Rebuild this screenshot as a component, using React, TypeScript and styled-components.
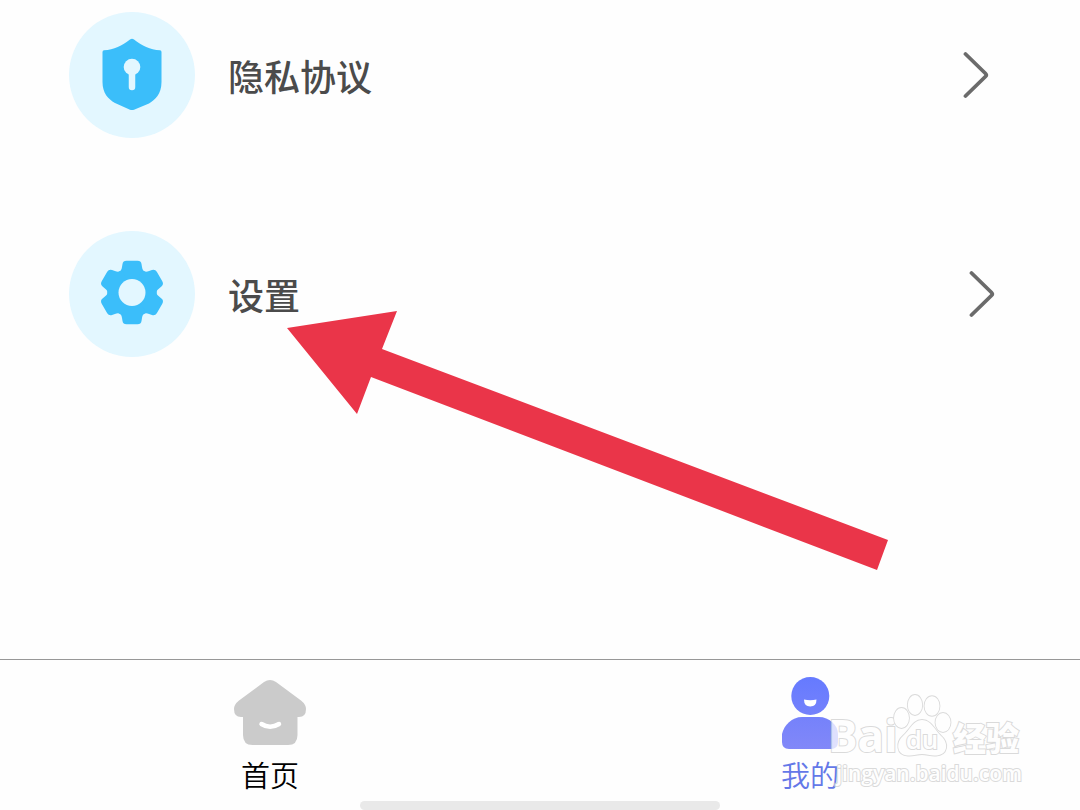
import React from "react";
import styled, { createGlobalStyle } from "styled-components";

const GlobalStyle = createGlobalStyle`
  *, *::before, *::after { box-sizing: border-box; }
  body {
    margin: 0;
    background: #fefefe;
    font-family: "Noto Sans CJK SC", "Noto Sans", sans-serif;
  }
`;

const Page = styled.div`
  position: relative;
  display: flex;
  flex-direction: column;
  min-height: 100vh;
  overflow: hidden;
`;

const Menu = styled.main`
  flex: 1;
  display: flex;
  flex-direction: column;
  gap: 93px;
  padding-top: 12px;
`;

const MenuRow = styled.button<{ $end: number }>`
  display: flex;
  align-items: center;
  gap: 33px;
  width: 100%;
  padding: 0 ${(p) => p.$end}px 0 69px;
  border: 0;
  background: none;
  color: #4b4b4b;
  font: inherit;
  text-align: left;
  cursor: pointer;
`;

const Badge = styled.span`
  display: flex;
  flex: none;
  width: 126px;
  height: 126px;
  border-radius: 50%;
  background: #e3f7ff;
`;

const RowLabel = styled.span`
  flex: 1;
  font-size: 36px;
  font-weight: 500;
  line-height: 54px;
`;

const TabBar = styled.nav`
  display: grid;
  grid-template-columns: 1fr 1fr;
  border-top: 1px solid #979797;
`;

const Tab = styled.a<{ $active?: boolean }>`
  display: flex;
  flex-direction: column;
  align-items: center;
  gap: 2px;
  padding-top: 16px;
  color: ${(p) => (p.$active ? "#6478e8" : "#000")};
  font-size: 29px;
  font-weight: 350;
  line-height: 44px;
  text-decoration: none;
`;

const HomeIndicator = styled.div`
  align-self: center;
  width: 33.333%;
  height: 9px;
  margin-top: 5px;
  border-radius: 5px;
  background: #e9e9e9;
`;

const Pointer = styled.svg`
  position: absolute;
  top: 310px;
  left: 287px;
  pointer-events: none;
`;

const Watermark = styled.div`
  position: absolute;
  right: 58px;
  bottom: 22px;
  width: 194px;
  opacity: 0.75;
  color: #fff;
  font-family: "Open Sans", "Noto Sans CJK SC", sans-serif;
  font-weight: 700;
  -webkit-text-stroke: 2px #cfcfcf;
  paint-order: stroke fill;
  pointer-events: none;
`;

const Brand = styled.div`
  display: flex;
  align-items: flex-end;
  height: 64px;
  font-size: 44px;
  line-height: 46px;
`;

const BrandName = styled.span`
  width: 65px;
  white-space: nowrap;
`;

const BrandSection = styled.span`
  font-family: "Noto Sans CJK SC", sans-serif;
  font-size: 33px;
  font-weight: 900;
  line-height: 42px;
`;

const Domain = styled.div`
  font-size: 21px;
  font-weight: 600;
  line-height: 30px;
  text-align: right;
  white-space: nowrap;
`;

const ShieldIcon = () => (
  <svg width="126" height="126" viewBox="0 0 126 126" aria-hidden="true">
    <path
      d="M61 27.400Q63 26 65 27.400C73 33.500 81 37.500 91 38.300Q92.500 38.500 92.500 40V70C92.500 82 86 88 80 91.500L65 97.700Q63 98.500 61 97.700L46 91C39 87 33.500 81 33.500 70V40Q33.500 38.500 35 38.300C45 37.500 53 33.500 61 27.400Z"
      fill="#3bbefa"
    />
    <circle cx="63" cy="55" r="8.300" fill="#e3f7ff" />
    <path d="M63 59V75" stroke="#e3f7ff" strokeWidth="6.500" strokeLinecap="round" />
  </svg>
);

const GearIcon = () => (
  <svg width="126" height="126" viewBox="0 0 126 126" aria-hidden="true">
    <g fill="#3bbefa">
      <circle cx="63" cy="61.500" r="24.500" />
      {[0, 60, 120, 180, 240, 300].map((angle) => (
        <path
          key={angle}
          transform={`rotate(${angle} 63 61.500)`}
          d="M48 41.500Q52.500 41 53 36L53.500 33Q54 29.700 57.500 29.700H68.500Q72 29.700 72.500 33L73 36Q73.500 41 78 41.500L63 61Z"
        />
      ))}
    </g>
    <circle cx="63" cy="61.500" r="13.500" fill="#e3f7ff" />
  </svg>
);

const Chevron = () => (
  <svg width="27" height="48" viewBox="0 0 27 48" fill="none" aria-hidden="true">
    <path
      d="M2.500 3L22.500 22.500Q24 24 22.500 25.500L2.500 45"
      stroke="#6b6b6b"
      strokeWidth="3.800"
      strokeLinecap="round"
    />
  </svg>
);

const HomeIcon = () => (
  <svg width="72" height="74" viewBox="0 0 72 74" aria-hidden="true">
    <path
      d="M30 6Q36 2 42 6L67 24.500Q72 28.500 72 33Q72 41 65 41H63.500V59Q63.500 69 54 69H18.500Q9 69 9 59V41H7Q0 41 0 33Q0 28.500 5 24.500Z"
      fill="#cbcbcb"
    />
    <path
      d="M27.500 48Q36 53.500 45 48"
      fill="none"
      stroke="#fff"
      strokeWidth="4.500"
      strokeLinecap="round"
    />
  </svg>
);

const ProfileIcon = () => (
  <svg width="56" height="74" viewBox="0 0 56 74" aria-hidden="true">
    <defs>
      <linearGradient id="profileFill" x1="0" y1="0" x2="0" y2="74" gradientUnits="userSpaceOnUse">
        <stop offset="0" stopColor="#657aff" />
        <stop offset="1" stopColor="#8288f8" />
      </linearGradient>
    </defs>
    <circle cx="28.300" cy="20" r="19" fill="url(#profileFill)" />
    <path
      d="M20 41H37C47 41 56 49 56 58V66Q56 73 49 73H7Q0 73 0 66V58C2 49 10 41 20 41Z"
      fill="url(#profileFill)"
    />
    <path d="M22 23.500Q28.300 25 34.500 23.500Q34.500 30.500 28.300 30.500Q22 30.500 22 23.500Z" fill="#fff" />
  </svg>
);

const PawLogo = () => (
  <svg width="60" height="64" viewBox="0 0 60 64" aria-hidden="true">
    <g fill="#fff" stroke="#cfcfcf" strokeWidth="1.800">
      <ellipse cx="8.500" cy="24" rx="7.500" ry="10" />
      <ellipse cx="22" cy="11" rx="7.200" ry="10" />
      <ellipse cx="39" cy="12" rx="7.500" ry="9.800" />
      <ellipse cx="50" cy="28.500" rx="7.500" ry="9.500" />
      <path d="M29 26C38 26 41 35 48 42C56 49 55 61 43 61.500C38 62 34 60 29 60C24 60 20 62 15 61.500C3 61 3 48 10 42C17 36 20 26 29 26Z" />
    </g>
    <text
      x="29"
      y="55"
      textAnchor="middle"
      fontFamily="Open Sans, sans-serif"
      fontSize="26"
      fontWeight="600"
      fill="#fff"
      stroke="#cfcfcf"
      strokeWidth="2"
      paintOrder="stroke"
    >
      du
    </text>
  </svg>
);

export default function App() {
  return (
    <>
      <GlobalStyle />
      <Page>
        <Menu>
          <MenuRow type="button" $end={90}>
            <Badge>
              <ShieldIcon />
            </Badge>
            <RowLabel>隐私协议</RowLabel>
            <Chevron />
          </MenuRow>
          <MenuRow type="button" $end={84}>
            <Badge>
              <GearIcon />
            </Badge>
            <RowLabel>设置</RowLabel>
            <Chevron />
          </MenuRow>
        </Menu>
        <TabBar>
          <Tab href="#home">
            <HomeIcon />
            首页
          </Tab>
          <Tab href="#profile" $active aria-current="page">
            <ProfileIcon />
            我的
          </Tab>
        </TabBar>
        <HomeIndicator />
        <Pointer width="602" height="261" viewBox="0 0 602 261" aria-hidden="true">
          <path d="M0 18L110 1L95 39L601 230L590 260L84 67L70 104Z" fill="#ea3549" />
        </Pointer>
        <Watermark>
          <Brand>
            <BrandName>Bai</BrandName>
            <PawLogo />
            <BrandSection>经验</BrandSection>
          </Brand>
          <Domain>jingyan.baidu.com</Domain>
        </Watermark>
      </Page>
    </>
  );
}
